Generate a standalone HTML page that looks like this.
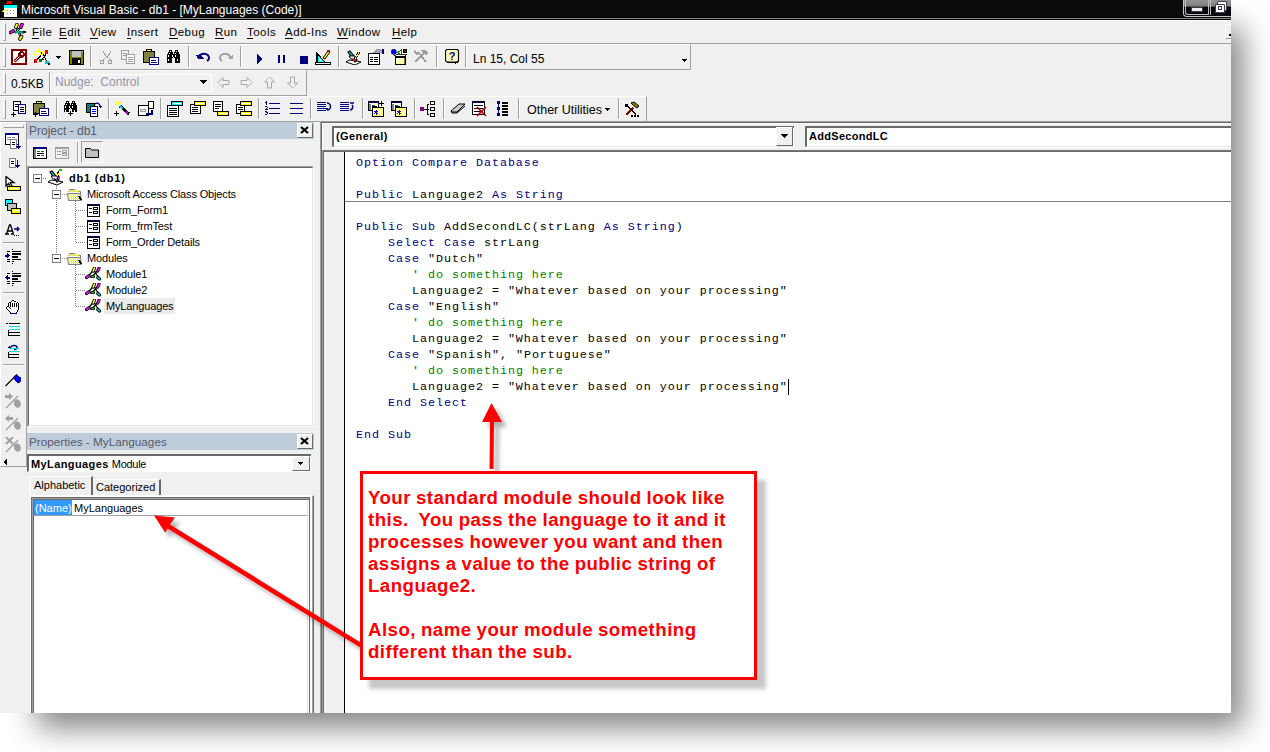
<!DOCTYPE html>
<html><head><meta charset="utf-8">
<style>
*{box-sizing:border-box;margin:0;padding:0}
html,body{width:1270px;height:752px;overflow:hidden;background:#fff;font-family:"Liberation Sans",sans-serif}
.a{position:absolute}
.t{white-space:pre;font-size:11px;color:#000;line-height:13px}
#win{position:absolute;left:0;top:0;width:1231px;height:713px;background:#f0f0f0;overflow:hidden;}
.code{position:absolute;left:356px;font-family:"Liberation Mono",monospace;font-size:11.7px;letter-spacing:0.98px;line-height:16px;white-space:pre;color:#000}
.k{color:#000080}
.c{color:#008000}
u{text-decoration:none;border-bottom:1px solid currentColor}
</style></head><body>
<div class="a" style="left:37px;top:28px;width:1206px;height:700px;background:rgba(0,0,0,0.48);filter:blur(15px)"></div>
<div id="win">
<div class="a" style="left:0px;top:0px;width:1231px;height:17px;background:#0b0b0b"></div>
<div class="a" style="left:0px;top:17px;width:1231px;height:1px;background:#000"></div>
<div class="a" style="left:0px;top:18px;width:1231px;height:1px;background:#8a8a8a"></div>
<div class="a" style="left:0px;top:19px;width:1231px;height:1px;background:#000"></div>
<div class="a" style="left:0px;top:20px;width:1231px;height:1px;background:#fff"></div>
<div class="a t" style="left:21px;top:3px;font-size:12px;color:#fff;line-height:14px">Microsoft Visual Basic - db1 - [MyLanguages (Code)]</div>
<svg class="a" style="left:1px;top:1px" width="16" height="16" viewBox="0 0 16 16" shape-rendering="crispEdges"><rect x="3" y="4" width="13" height="12" fill="#fff"/><rect x="3" y="4" width="13" height="3" fill="#0ff"/><rect x="2" y="3" width="14" height="1" fill="#000"/><rect x="6" y="0" width="4" height="2" fill="#f00"/><rect x="5" y="2" width="6" height="1" fill="#f00"/><rect x="6" y="9" width="1" height="1" fill="#aaa"/><rect x="9" y="9" width="1" height="1" fill="#aaa"/><rect x="12" y="9" width="1" height="1" fill="#aaa"/><rect x="6" y="12" width="1" height="1" fill="#aaa"/><rect x="9" y="12" width="1" height="1" fill="#aaa"/><rect x="12" y="12" width="1" height="1" fill="#aaa"/><path d="M0 11l5-3 1 1-5 3z" fill="#ff0" stroke="none" stroke-width="1" /><rect x="0" y="11" width="2" height="1" fill="#000"/></svg>
<div class="a" style="left:1183px;top:0px;width:48px;height:17px;background:linear-gradient(#939393,#7d7d7d 40%,#000 42%,#0a0a14 100%);border-left:1px solid #c8c8c8;border-bottom:1px solid #c8c8c8;border-bottom-left-radius:4px"></div>
<div class="a" style="left:1185px;top:0px;width:24px;height:15px;border-left:1px solid #bdbdbd;border-bottom:1px solid #bdbdbd;border-right:1px solid #bdbdbd;border-bottom-left-radius:3px"></div>
<div class="a" style="left:1210px;top:0px;width:1px;height:15px;background:#bdbdbd"></div>
<div class="a" style="left:1191px;top:7px;width:12px;height:5px;background:#eee;border:1px solid #3a3a50"></div>
<div class="a" style="left:1217px;top:1px;width:10px;height:10px;background:#f4f4f4;border:1px solid #3a3a50;border-radius:1px"></div>
<div class="a" style="left:1215px;top:4px;width:10px;height:9px;background:#fff;border:1px solid #3a3a50;border-radius:1px"></div>
<div class="a" style="left:1218px;top:6px;width:4px;height:4px;background:#fff;border:1px solid #3a3a50"></div>
<div class="a" style="left:3px;top:23px;width:3px;height:18px;border-left:1px solid #fff;border-top:1px solid #fff;border-right:1px solid #a0a0a0;border-bottom:1px solid #a0a0a0"></div>
<svg class="a" style="left:9px;top:23px" width="18" height="18" viewBox="0 0 18 18" shape-rendering="crispEdges"><path d="M4 8.5L15 9.5M7 4l5 10M12 4L6 10" fill="none" stroke="#000" stroke-width="2.2" shape-rendering="geometricPrecision"/><path d="M4 8.5L15 9.5M7 4l5 10M12 4L6 10" fill="none" stroke="#0cc" stroke-width="1" shape-rendering="geometricPrecision"/><path d="M8 1.5L6.8 4.2" fill="none" stroke="#000" stroke-width="3.6" stroke-linecap="round" shape-rendering="geometricPrecision"/><path d="M8 1.5L6.8 4.2" fill="none" stroke="#ff0" stroke-width="2" stroke-linecap="round" shape-rendering="geometricPrecision"/><path d="M13 1.5L11.8 4.2" fill="none" stroke="#000" stroke-width="3.6" stroke-linecap="round" shape-rendering="geometricPrecision"/><path d="M13 1.5L11.8 4.2" fill="none" stroke="#f0f" stroke-width="2" stroke-linecap="round" shape-rendering="geometricPrecision"/><path d="M1.5 9.5L4 8" fill="none" stroke="#000" stroke-width="3.6" stroke-linecap="round" shape-rendering="geometricPrecision"/><path d="M1.5 9.5L4 8" fill="none" stroke="#f0f" stroke-width="2" stroke-linecap="round" shape-rendering="geometricPrecision"/><path d="M12.5 13.5L11 16" fill="none" stroke="#000" stroke-width="3.6" stroke-linecap="round" shape-rendering="geometricPrecision"/><path d="M12.5 13.5L11 16" fill="none" stroke="#ff0" stroke-width="2" stroke-linecap="round" shape-rendering="geometricPrecision"/><rect x="6" y="8" width="3" height="2" fill="#0c0"/><rect x="14" y="8" width="3" height="2" fill="#000"/></svg>
<div class="a t" style="left:32px;top:26px;font-size:11.5px;letter-spacing:0.45px"><u>F</u>ile</div>
<div class="a t" style="left:59px;top:26px;font-size:11.5px;letter-spacing:0.45px"><u>E</u>dit</div>
<div class="a t" style="left:90px;top:26px;font-size:11.5px;letter-spacing:0.45px"><u>V</u>iew</div>
<div class="a t" style="left:127px;top:26px;font-size:11.5px;letter-spacing:0.45px"><u>I</u>nsert</div>
<div class="a t" style="left:169px;top:26px;font-size:11.5px;letter-spacing:0.45px"><u>D</u>ebug</div>
<div class="a t" style="left:215px;top:26px;font-size:11.5px;letter-spacing:0.45px"><u>R</u>un</div>
<div class="a t" style="left:247px;top:26px;font-size:11.5px;letter-spacing:0.45px"><u>T</u>ools</div>
<div class="a t" style="left:285px;top:26px;font-size:11.5px;letter-spacing:0.45px"><u>A</u>dd-Ins</div>
<div class="a t" style="left:337px;top:26px;font-size:11.5px;letter-spacing:0.45px"><u>W</u>indow</div>
<div class="a t" style="left:392px;top:26px;font-size:11.5px;letter-spacing:0.45px"><u>H</u>elp</div>
<div class="a" style="left:1225px;top:24px;width:8px;height:15px;border-left:1px solid #fff;border-top:1px solid #fff;border-bottom:1px solid #a0a0a0"></div>
<div class="a" style="left:1229px;top:34px;width:2px;height:2px;background:#000"></div>
<div class="a" style="left:0px;top:43px;width:1231px;height:1px;background:#a0a0a0"></div>
<div class="a" style="left:0px;top:44px;width:691px;height:26px;border-top:1px solid #fff;border-right:1px solid #a0a0a0;border-bottom:1px solid #a0a0a0"></div>
<div class="a" style="left:3px;top:47px;width:3px;height:20px;border-left:1px solid #fff;border-top:1px solid #fff;border-right:1px solid #a0a0a0;border-bottom:1px solid #a0a0a0"></div>
<svg class="a" style="left:11px;top:49px" width="16" height="16" viewBox="0 0 16 16" shape-rendering="crispEdges"><rect x="0" y="0" width="16" height="16" fill="#800000"/><rect x="2" y="2" width="12" height="12" fill="#fff"/><circle cx="10.5" cy="5.5" r="3.2" fill="#800000"/><circle cx="11" cy="5" r="1" fill="#fff"/><path d="M7.5 6.5L9.5 8.5L4.5 13.5L2.5 11.5Z" fill="#800000" stroke="none" stroke-width="1" shape-rendering="geometricPrecision"/><path d="M8.5 7.5L3.8 12.2" fill="none" stroke="#fff" stroke-width="0.8" shape-rendering="geometricPrecision"/></svg>
<svg class="a" style="left:34px;top:49px" width="16" height="16" viewBox="0 0 16 16" shape-rendering="crispEdges"><path d="M1 1l3 3M5 0v3M0 5h3M7 2L5 4" fill="none" stroke="#ff0" stroke-width="1.2" /><rect x="2" y="3" width="3" height="2" fill="#fff"/><path d="M2 12L9 4M5 12l5-2M8 3l5 10M13 4l-7 9" fill="none" stroke="#000" stroke-width="1" /><rect x="6" y="2" width="3" height="4" fill="#ff0"/><rect x="7" y="3" width="1" height="2" fill="#000"/><rect x="11" y="1" width="3" height="4" fill="#f00"/><rect x="13" y="3" width="1" height="1" fill="#000"/><rect x="0" y="10" width="3" height="4" fill="#f00"/><rect x="0" y="12" width="1" height="1" fill="#000"/><rect x="5" y="10" width="3" height="3" fill="#008000"/><rect x="11" y="12" width="4" height="3" fill="#0cc"/><rect x="14" y="14" width="2" height="2" fill="#000"/></svg>
<svg class="a" style="left:56px;top:56px" width="6" height="4" viewBox="0 0 6 4" shape-rendering="crispEdges"><path d="M0 0h5l-2.5 3z" fill="#000" stroke="none" stroke-width="1" /></svg>
<svg class="a" style="left:69px;top:50px" width="16" height="16" viewBox="0 0 16 16" shape-rendering="crispEdges"><rect x="0" y="0" width="15" height="15" fill="#000"/><rect x="1" y="1" width="13" height="13" fill="#808000"/><rect x="3" y="1" width="9" height="6" fill="#c0c0c0"/><rect x="3" y="8" width="9" height="6" fill="#000"/><rect x="9" y="10" width="2" height="3" fill="#fff"/><rect x="13" y="1" width="1" height="1" fill="#fff"/></svg>
<div class="a" style="left:90px;top:46px;width:1px;height:21px;background:#a0a0a0"></div>
<div class="a" style="left:91px;top:46px;width:1px;height:21px;background:#fff"></div>
<svg class="a" style="left:99px;top:50px" width="15" height="15" viewBox="0 0 15 15" shape-rendering="crispEdges"><path d="M4 1l4 7 4-7M6 8l-2 2m6-2 2 2" fill="none" stroke="#a0a0a0" stroke-width="1" /><circle cx="3" cy="12" r="2" fill="none" stroke="#a0a0a0"/><circle cx="11" cy="12" r="2" fill="none" stroke="#a0a0a0"/></svg>
<svg class="a" style="left:120px;top:49px" width="16" height="16" viewBox="0 0 16 16" shape-rendering="crispEdges"><rect x="1" y="1" width="8" height="10" fill="#a0a0a0"/><rect x="2" y="2" width="6" height="8" fill="#f0f0f0"/><rect x="3" y="4" width="4" height="1" fill="#a0a0a0"/><rect x="3" y="6" width="4" height="1" fill="#a0a0a0"/><rect x="6" y="5" width="9" height="10" fill="#a0a0a0"/><rect x="7" y="6" width="7" height="8" fill="#fff"/><rect x="8" y="8" width="5" height="1" fill="#a0a0a0"/><rect x="8" y="10" width="5" height="1" fill="#a0a0a0"/><rect x="8" y="12" width="5" height="1" fill="#a0a0a0"/></svg>
<svg class="a" style="left:143px;top:49px" width="16" height="16" viewBox="0 0 16 16" shape-rendering="crispEdges"><rect x="0" y="2" width="12" height="12" fill="#000"/><rect x="1" y="3" width="10" height="10" fill="#808040"/><rect x="3" y="0" width="6" height="3" fill="#000"/><rect x="4" y="1" width="4" height="1" fill="#ff0"/><rect x="6" y="8" width="10" height="8" fill="#000080"/><rect x="7" y="9" width="8" height="6" fill="#fff"/><rect x="8" y="11" width="5" height="1" fill="#000080"/><rect x="8" y="13" width="6" height="1" fill="#000080"/></svg>
<svg class="a" style="left:166px;top:50px" width="15" height="13" viewBox="0 0 15 13" shape-rendering="crispEdges"><rect x="3" y="0" width="3" height="1" fill="#000"/><rect x="9" y="0" width="3" height="1" fill="#000"/><rect x="3" y="1" width="1" height="1" fill="#000"/><rect x="4" y="1" width="1" height="1" fill="#fff"/><rect x="5" y="1" width="1" height="1" fill="#000"/><rect x="9" y="1" width="1" height="1" fill="#000"/><rect x="10" y="1" width="1" height="1" fill="#fff"/><rect x="11" y="1" width="1" height="1" fill="#000"/><rect x="2" y="2" width="5" height="1" fill="#000"/><rect x="8" y="2" width="5" height="1" fill="#000"/><rect x="2" y="3" width="1" height="1" fill="#000"/><rect x="3" y="3" width="1" height="1" fill="#fff"/><rect x="4" y="3" width="3" height="1" fill="#000"/><rect x="8" y="3" width="1" height="1" fill="#000"/><rect x="9" y="3" width="1" height="1" fill="#fff"/><rect x="10" y="3" width="3" height="1" fill="#000"/><rect x="1" y="4" width="13" height="1" fill="#000"/><rect x="1" y="5" width="1" height="1" fill="#000"/><rect x="2" y="5" width="1" height="1" fill="#fff"/><rect x="3" y="5" width="3" height="1" fill="#000"/><rect x="6" y="5" width="1" height="1" fill="#fff"/><rect x="7" y="5" width="2" height="1" fill="#000"/><rect x="9" y="5" width="1" height="1" fill="#fff"/><rect x="10" y="5" width="4" height="1" fill="#000"/><rect x="1" y="6" width="1" height="1" fill="#000"/><rect x="2" y="6" width="1" height="1" fill="#fff"/><rect x="3" y="6" width="3" height="1" fill="#000"/><rect x="6" y="6" width="1" height="1" fill="#fff"/><rect x="7" y="6" width="2" height="1" fill="#000"/><rect x="9" y="6" width="1" height="1" fill="#fff"/><rect x="10" y="6" width="4" height="1" fill="#000"/><rect x="1" y="7" width="6" height="1" fill="#000"/><rect x="8" y="7" width="6" height="1" fill="#000"/><rect x="1" y="8" width="5" height="1" fill="#000"/><rect x="9" y="8" width="5" height="1" fill="#000"/><rect x="1" y="9" width="1" height="1" fill="#000"/><rect x="2" y="9" width="1" height="1" fill="#fff"/><rect x="3" y="9" width="3" height="1" fill="#000"/><rect x="9" y="9" width="2" height="1" fill="#000"/><rect x="11" y="9" width="1" height="1" fill="#fff"/><rect x="12" y="9" width="2" height="1" fill="#000"/><rect x="1" y="10" width="1" height="1" fill="#000"/><rect x="2" y="10" width="1" height="1" fill="#fff"/><rect x="3" y="10" width="3" height="1" fill="#000"/><rect x="9" y="10" width="2" height="1" fill="#000"/><rect x="11" y="10" width="1" height="1" fill="#fff"/><rect x="12" y="10" width="2" height="1" fill="#000"/><rect x="1" y="11" width="5" height="1" fill="#000"/><rect x="9" y="11" width="5" height="1" fill="#000"/><rect x="1" y="12" width="5" height="1" fill="#000"/><rect x="9" y="12" width="5" height="1" fill="#000"/></svg>
<div class="a" style="left:188px;top:46px;width:1px;height:21px;background:#a0a0a0"></div>
<div class="a" style="left:189px;top:46px;width:1px;height:21px;background:#fff"></div>
<svg class="a" style="left:196px;top:51px" width="15" height="12" viewBox="0 0 15 12" shape-rendering="crispEdges"><path d="M3 3v5h5" fill="#000080" stroke="none" stroke-width="1" /><path d="M2.5 8L0 4.5 5 3z" fill="#000080" stroke="none" stroke-width="1" /><path d="M3 7a5 4 0 1 1 8 3" fill="none" stroke="#000080" stroke-width="2" shape-rendering="geometricPrecision"/></svg>
<svg class="a" style="left:218px;top:51px" width="16" height="12" viewBox="0 0 16 12" shape-rendering="crispEdges"><path d="M12 7a5 4 0 1 0-8 3" fill="none" stroke="#a0a0a0" stroke-width="2" shape-rendering="geometricPrecision"/><path d="M10 8h5V3z" fill="#a0a0a0" stroke="none" stroke-width="1" /></svg>
<div class="a" style="left:240px;top:46px;width:1px;height:21px;background:#a0a0a0"></div>
<div class="a" style="left:241px;top:46px;width:1px;height:21px;background:#fff"></div>
<svg class="a" style="left:257px;top:54px" width="7" height="10" viewBox="0 0 7 10" shape-rendering="crispEdges"><path d="M0 0v10l6-5z" fill="#000080" stroke="none" stroke-width="1" /></svg>
<svg class="a" style="left:278px;top:55px" width="8" height="9" viewBox="0 0 8 9" shape-rendering="crispEdges"><rect x="0" y="0" width="2" height="8" fill="#000080"/><rect x="5" y="0" width="2" height="8" fill="#000080"/></svg>
<svg class="a" style="left:300px;top:56px" width="9" height="9" viewBox="0 0 9 9" shape-rendering="crispEdges"><rect x="0" y="0" width="8" height="8" fill="#000080"/></svg>
<svg class="a" style="left:315px;top:49px" width="16" height="16" viewBox="0 0 16 16" shape-rendering="crispEdges"><path d="M1 15V2l11 13z" fill="#000" stroke="none" stroke-width="1" /><path d="M2.5 12.8V5.5L9 13z" fill="#0ff" stroke="none" stroke-width="1" /><path d="M4 12V9l3 3z" fill="#fff" stroke="none" stroke-width="1" /><rect x="0" y="13" width="16" height="3" fill="#000"/><rect x="1" y="14" width="14" height="1" fill="#fff"/><path d="M8 9l5-7 2 1-5 7z" fill="#ff0" stroke="#000" stroke-width="1" shape-rendering="geometricPrecision"/><rect x="12" y="1" width="3" height="2" fill="#c00000"/></svg>
<div class="a" style="left:338px;top:46px;width:1px;height:21px;background:#a0a0a0"></div>
<div class="a" style="left:339px;top:46px;width:1px;height:21px;background:#fff"></div>
<svg class="a" style="left:345px;top:49px" width="16" height="16" viewBox="0 0 16 16" shape-rendering="crispEdges"><path d="M1 13l3-2 8 1 4 1-6 3z" fill="#fff" stroke="#000" stroke-width="1" shape-rendering="geometricPrecision"/><path d="M3 3l2-1 7 9-2 2z" fill="#0cc" stroke="#000" stroke-width="1.2" shape-rendering="geometricPrecision"/><path d="M4 7h6l1 3H6z" fill="#fff" stroke="#000" stroke-width="1" shape-rendering="geometricPrecision"/><path d="M10 10l4-7" fill="none" stroke="#000" stroke-width="2.4" /><path d="M10 10l4-7" fill="none" stroke="#ff0" stroke-width="1" /><rect x="8" y="10" width="2" height="2" fill="#f00"/></svg>
<svg class="a" style="left:368px;top:49px" width="16" height="16" viewBox="0 0 16 16" shape-rendering="crispEdges"><rect x="0" y="4" width="12" height="12" fill="#000"/><rect x="1" y="5" width="10" height="10" fill="#fff"/><rect x="2" y="8" width="3" height="1" fill="#000"/><rect x="6" y="8" width="4" height="1" fill="#000"/><rect x="2" y="10" width="3" height="1" fill="#000"/><rect x="6" y="10" width="4" height="1" fill="#000"/><rect x="2" y="12" width="3" height="1" fill="#000"/><rect x="6" y="12" width="4" height="1" fill="#000"/><path d="M4 4l5-4h4l2 4z" fill="#a0a0a0" stroke="none" stroke-width="1" /><rect x="14" y="0" width="2" height="5" fill="#000080"/></svg>
<svg class="a" style="left:391px;top:49px" width="16" height="16" viewBox="0 0 16 16" shape-rendering="crispEdges"><circle cx="2.8" cy="2.8" r="2.6" fill="#0000ff" stroke="#000" stroke-width="0.6" shape-rendering="geometricPrecision"/><rect x="12" y="0" width="4" height="4" fill="#000"/><rect x="13" y="1" width="2" height="2" fill="#800000"/><path d="M7 3.5l3-2.5v5z" fill="#fff" stroke="#008000" stroke-width="1" /><path d="M3 6l3 3" fill="none" stroke="#000" stroke-width="1" /><rect x="4" y="7" width="11" height="9" fill="#000"/><rect x="5" y="9" width="8" height="6" fill="#ffff80"/><rect x="5" y="9" width="8" height="6" fill="url(#chk)"/><rect x="13" y="9" width="1" height="6" fill="#808000"/><path d="M4 7l2-2h10l-2 2z" fill="#fff" stroke="#000" stroke-width="0.8" /></svg>
<svg class="a" style="left:413px;top:49px" width="16" height="16" viewBox="0 0 16 16" shape-rendering="crispEdges"><path d="M2 13L11 4M5 3l8 10" fill="none" stroke="#a0a0a0" stroke-width="2" /><path d="M8 1h4l3 3-2 2-3-2z" fill="#a0a0a0" stroke="none" stroke-width="1" /><path d="M1 1l4 4-1 2-3-3z" fill="#a0a0a0" stroke="none" stroke-width="1" /></svg>
<div class="a" style="left:436px;top:46px;width:1px;height:21px;background:#a0a0a0"></div>
<div class="a" style="left:437px;top:46px;width:1px;height:21px;background:#fff"></div>
<svg class="a" style="left:445px;top:49px" width="16" height="16" viewBox="0 0 16 16" shape-rendering="crispEdges"><rect x="0.5" y="0.5" width="13" height="12.5" rx="2" fill="#ffffc0" stroke="#000" stroke-width="1.2" shape-rendering="geometricPrecision"/><path d="M9 13l2 3v-3z" fill="#000" stroke="none" stroke-width="1" /><rect x="13" y="3" width="1" height="10" fill="#000"/><rect x="2" y="13" width="11" height="1" fill="#000"/><text x="7" y="11" font-size="11" font-weight="bold" text-anchor="middle" fill="#000080" font-family="Liberation Sans">?</text></svg>
<div class="a" style="left:465px;top:46px;width:1px;height:21px;background:#a0a0a0"></div>
<div class="a" style="left:466px;top:46px;width:1px;height:21px;background:#fff"></div>
<div class="a t" style="left:473px;top:52px;font-size:12px;line-height:14px">Ln 15, Col 55</div>
<svg class="a" style="left:682px;top:59px" width="6" height="4" viewBox="0 0 6 4" shape-rendering="crispEdges"><path d="M0 0h5l-2.5 3z" fill="#000" stroke="none" stroke-width="1" /></svg>
<div class="a" style="left:0px;top:70px;width:307px;height:26px;border-top:1px solid #fff;border-right:1px solid #a0a0a0;border-bottom:1px solid #a0a0a0"></div>
<div class="a" style="left:3px;top:73px;width:3px;height:20px;border-left:1px solid #fff;border-top:1px solid #fff;border-right:1px solid #a0a0a0;border-bottom:1px solid #a0a0a0"></div>
<div class="a t" style="left:11px;top:77px;font-size:12px;line-height:14px">0.5KB</div>
<div class="a" style="left:49px;top:72px;width:1px;height:21px;background:#a0a0a0"></div>
<div class="a" style="left:50px;top:72px;width:1px;height:21px;background:#fff"></div>
<div class="a" style="left:54px;top:74px;width:158px;height:18px;border:1px solid #fff"></div>
<div class="a t" style="left:55px;top:75px;font-size:12px;line-height:14px;color:#9595a8">Nudge:  Control</div>
<svg class="a" style="left:200px;top:80px" width="8" height="5" viewBox="0 0 8 5" shape-rendering="crispEdges"><path d="M0 0h7l-3.5 4z" fill="#000" stroke="none" stroke-width="1" /></svg>
<svg class="a" style="left:217px;top:76px" width="13" height="13" viewBox="0 0 13 13" shape-rendering="crispEdges"><g transform="rotate(0 6.5 6.5)"><path d="M1 6.5L6 1.5V4.5H12V8.5H6V11.5Z" fill="none" stroke="#a8a8a8" stroke-width="1" shape-rendering="geometricPrecision"/><rect x="2" y="7" width="1" height="1" fill="#fff"/></g></svg>
<svg class="a" style="left:240px;top:76px" width="13" height="13" viewBox="0 0 13 13" shape-rendering="crispEdges"><g transform="rotate(180 6.5 6.5)"><path d="M1 6.5L6 1.5V4.5H12V8.5H6V11.5Z" fill="none" stroke="#a8a8a8" stroke-width="1" shape-rendering="geometricPrecision"/><rect x="2" y="7" width="1" height="1" fill="#fff"/></g></svg>
<svg class="a" style="left:263px;top:76px" width="13" height="13" viewBox="0 0 13 13" shape-rendering="crispEdges"><g transform="rotate(90 6.5 6.5)"><path d="M1 6.5L6 1.5V4.5H12V8.5H6V11.5Z" fill="none" stroke="#a8a8a8" stroke-width="1" shape-rendering="geometricPrecision"/><rect x="2" y="7" width="1" height="1" fill="#fff"/></g></svg>
<svg class="a" style="left:286px;top:76px" width="13" height="13" viewBox="0 0 13 13" shape-rendering="crispEdges"><g transform="rotate(270 6.5 6.5)"><path d="M1 6.5L6 1.5V4.5H12V8.5H6V11.5Z" fill="none" stroke="#a8a8a8" stroke-width="1" shape-rendering="geometricPrecision"/><rect x="2" y="7" width="1" height="1" fill="#fff"/></g></svg>
<div class="a" style="left:0px;top:96px;width:647px;height:26px;border-top:1px solid #fff;border-right:1px solid #a0a0a0;border-bottom:1px solid #a0a0a0"></div>
<div class="a" style="left:3px;top:99px;width:3px;height:20px;border-left:1px solid #fff;border-top:1px solid #fff;border-right:1px solid #a0a0a0;border-bottom:1px solid #a0a0a0"></div>
<svg class="a" style="left:11px;top:101px" width="16" height="16" viewBox="0 0 16 16" shape-rendering="crispEdges"><rect x="2" y="0" width="8" height="10" fill="#000"/><rect x="3" y="1" width="6" height="8" fill="#fff"/><rect x="4" y="3" width="4" height="1" fill="#000"/><rect x="4" y="5" width="3" height="1" fill="#000"/><rect x="7" y="3" width="8" height="10" fill="#000080"/><rect x="8" y="4" width="6" height="8" fill="#fff"/><rect x="9" y="6" width="4" height="1" fill="#000"/><rect x="9" y="8" width="4" height="1" fill="#000"/><rect x="9" y="10" width="4" height="1" fill="#000"/><rect x="0" y="13" width="5" height="1" fill="#000"/><rect x="2" y="11" width="1" height="5" fill="#000"/></svg>
<svg class="a" style="left:33px;top:101px" width="16" height="16" viewBox="0 0 16 16" shape-rendering="crispEdges"><rect x="0" y="2" width="12" height="11" fill="#000"/><rect x="1" y="3" width="10" height="9" fill="#808040"/><rect x="3" y="0" width="6" height="3" fill="#000"/><rect x="4" y="1" width="4" height="1" fill="#ff0"/><rect x="6" y="7" width="10" height="8" fill="#000080"/><rect x="7" y="8" width="8" height="6" fill="#fff"/><rect x="8" y="10" width="5" height="1" fill="#000080"/><rect x="8" y="12" width="6" height="1" fill="#000080"/><rect x="0" y="13" width="5" height="1" fill="#000"/><rect x="2" y="11" width="1" height="5" fill="#000"/></svg>
<svg class="a" style="left:63px;top:101px" width="16" height="16" viewBox="0 0 16 16" shape-rendering="crispEdges"><rect x="3" y="0" width="3" height="1" fill="#000"/><rect x="9" y="0" width="3" height="1" fill="#000"/><rect x="3" y="1" width="1" height="1" fill="#000"/><rect x="4" y="1" width="1" height="1" fill="#fff"/><rect x="5" y="1" width="1" height="1" fill="#000"/><rect x="9" y="1" width="1" height="1" fill="#000"/><rect x="10" y="1" width="1" height="1" fill="#fff"/><rect x="11" y="1" width="1" height="1" fill="#000"/><rect x="2" y="2" width="5" height="1" fill="#000"/><rect x="8" y="2" width="5" height="1" fill="#000"/><rect x="2" y="3" width="1" height="1" fill="#000"/><rect x="3" y="3" width="1" height="1" fill="#fff"/><rect x="4" y="3" width="3" height="1" fill="#000"/><rect x="8" y="3" width="1" height="1" fill="#000"/><rect x="9" y="3" width="1" height="1" fill="#fff"/><rect x="10" y="3" width="3" height="1" fill="#000"/><rect x="1" y="4" width="13" height="1" fill="#000"/><rect x="1" y="5" width="1" height="1" fill="#000"/><rect x="2" y="5" width="1" height="1" fill="#fff"/><rect x="3" y="5" width="3" height="1" fill="#000"/><rect x="6" y="5" width="1" height="1" fill="#fff"/><rect x="7" y="5" width="2" height="1" fill="#000"/><rect x="9" y="5" width="1" height="1" fill="#fff"/><rect x="10" y="5" width="4" height="1" fill="#000"/><rect x="1" y="6" width="1" height="1" fill="#000"/><rect x="2" y="6" width="1" height="1" fill="#fff"/><rect x="3" y="6" width="3" height="1" fill="#000"/><rect x="6" y="6" width="1" height="1" fill="#fff"/><rect x="7" y="6" width="2" height="1" fill="#000"/><rect x="9" y="6" width="1" height="1" fill="#fff"/><rect x="10" y="6" width="4" height="1" fill="#000"/><rect x="1" y="7" width="6" height="1" fill="#000"/><rect x="8" y="7" width="6" height="1" fill="#000"/><rect x="1" y="8" width="5" height="1" fill="#000"/><rect x="9" y="8" width="5" height="1" fill="#000"/><rect x="1" y="9" width="1" height="1" fill="#000"/><rect x="2" y="9" width="1" height="1" fill="#fff"/><rect x="3" y="9" width="3" height="1" fill="#000"/><rect x="9" y="9" width="2" height="1" fill="#000"/><rect x="11" y="9" width="1" height="1" fill="#fff"/><rect x="12" y="9" width="2" height="1" fill="#000"/><rect x="1" y="10" width="1" height="1" fill="#000"/><rect x="2" y="10" width="1" height="1" fill="#fff"/><rect x="3" y="10" width="3" height="1" fill="#000"/><rect x="9" y="10" width="2" height="1" fill="#000"/><rect x="11" y="10" width="1" height="1" fill="#fff"/><rect x="12" y="10" width="2" height="1" fill="#000"/><rect x="5" y="12" width="5" height="1" fill="#000"/><rect x="7" y="10" width="1" height="5" fill="#000"/></svg>
<svg class="a" style="left:86px;top:101px" width="16" height="16" viewBox="0 0 16 16" shape-rendering="crispEdges"><rect x="0" y="2" width="9" height="10" fill="#000"/><rect x="1" y="3" width="7" height="8" fill="#008080"/><rect x="4" y="5" width="8" height="11" fill="#000"/><rect x="5" y="6" width="6" height="9" fill="#fff"/><rect x="6" y="8" width="4" height="1" fill="#00f"/><rect x="6" y="10" width="4" height="1" fill="#00f"/><rect x="6" y="12" width="4" height="1" fill="#00f"/><path d="M9 3a3 3 0 0 1 5 2" fill="none" stroke="#000080" stroke-width="1.3" shape-rendering="geometricPrecision"/><path d="M12 5h4l-2 2z" fill="#000080" stroke="none" stroke-width="1" /></svg>
<svg class="a" style="left:114px;top:101px" width="16" height="16" viewBox="0 0 16 16" shape-rendering="crispEdges"><rect x="4" y="0" width="1" height="3" fill="#ff0"/><rect x="1" y="3" width="3" height="1" fill="#ff0"/><rect x="2" y="1" width="1" height="1" fill="#ff0"/><rect x="6" y="2" width="1" height="1" fill="#ff0"/><rect x="5" y="4" width="2" height="2" fill="#ff0"/><path d="M6 5l9 8" fill="none" stroke="#000" stroke-width="3" /><path d="M6 5l3 3" fill="none" stroke="#0cc" stroke-width="2" /><path d="M12 11l2 2" fill="none" stroke="#c0c" stroke-width="2" /><rect x="0" y="12" width="5" height="1" fill="#000"/><rect x="2" y="10" width="1" height="5" fill="#000"/></svg>
<svg class="a" style="left:138px;top:101px" width="16" height="16" viewBox="0 0 16 16" shape-rendering="crispEdges"><rect x="0" y="4" width="11" height="11" fill="#000"/><rect x="1" y="5" width="9" height="9" fill="#fff"/><rect x="2" y="8" width="6" height="3" fill="#a0a0a0"/><rect x="3" y="9" width="4" height="1" fill="#fff"/><rect x="10" y="0" width="6" height="8" fill="#000"/><rect x="11" y="1" width="4" height="6" fill="#fff"/><path d="M14 9v4h-5" fill="none" stroke="#000080" stroke-width="1.3" /><path d="M9 11v4l-2-2z" fill="#000080" stroke="none" stroke-width="1" /></svg>
<svg class="a" style="left:167px;top:101px" width="16" height="16" viewBox="0 0 16 16" shape-rendering="crispEdges"><rect x="0" y="4" width="12" height="12" fill="#000"/><rect x="1" y="5" width="10" height="10" fill="#fff"/><rect x="2" y="7" width="8" height="1" fill="#000"/><rect x="2" y="9" width="8" height="1" fill="#000"/><rect x="2" y="11" width="8" height="1" fill="#000"/><rect x="2" y="13" width="8" height="1" fill="#000"/><rect x="4" y="0" width="12" height="5" fill="#000"/><rect x="5" y="1" width="10" height="3" fill="#0ff"/><rect x="6" y="2" width="8" height="1" fill="#fff"/></svg>
<svg class="a" style="left:190px;top:101px" width="16" height="16" viewBox="0 0 16 16" shape-rendering="crispEdges"><rect x="0" y="3" width="11" height="10" fill="#000"/><rect x="1" y="4" width="9" height="8" fill="#fff"/><rect x="2" y="6" width="6" height="1" fill="#000"/><rect x="2" y="8" width="6" height="1" fill="#000"/><rect x="2" y="10" width="6" height="1" fill="#000"/><rect x="4" y="0" width="12" height="5" fill="#000"/><rect x="5" y="1" width="10" height="3" fill="#ff0"/><rect x="6" y="2" width="8" height="1" fill="#fff"/></svg>
<svg class="a" style="left:213px;top:101px" width="16" height="16" viewBox="0 0 16 16" shape-rendering="crispEdges"><rect x="0" y="0" width="10" height="11" fill="#000"/><rect x="1" y="1" width="8" height="9" fill="#fff"/><rect x="2" y="3" width="6" height="1" fill="#000"/><rect x="2" y="5" width="6" height="1" fill="#000"/><rect x="2" y="7" width="4" height="1" fill="#000"/><rect x="4" y="10" width="12" height="5" fill="#000"/><rect x="5" y="11" width="10" height="3" fill="#ff0"/><rect x="6" y="12" width="8" height="1" fill="#fff"/></svg>
<svg class="a" style="left:236px;top:101px" width="16" height="16" viewBox="0 0 16 16" shape-rendering="crispEdges"><rect x="0" y="3" width="9" height="10" fill="#000"/><rect x="1" y="4" width="7" height="8" fill="#fff"/><rect x="2" y="6" width="5" height="1" fill="#000"/><rect x="2" y="8" width="5" height="1" fill="#000"/><rect x="4" y="0" width="12" height="5" fill="#000"/><rect x="5" y="1" width="10" height="3" fill="#ff0"/><rect x="6" y="2" width="8" height="1" fill="#fff"/><rect x="4" y="10" width="12" height="5" fill="#000"/><rect x="5" y="11" width="10" height="3" fill="#ff0"/><rect x="6" y="12" width="8" height="1" fill="#fff"/></svg>
<svg class="a" style="left:265px;top:101px" width="16" height="16" viewBox="0 0 16 16" shape-rendering="crispEdges"><rect x="1" y="0" width="1" height="1" fill="#000080"/><rect x="0" y="1" width="2" height="1" fill="#000080"/><rect x="1" y="2" width="1" height="1" fill="#000080"/><rect x="1" y="3" width="1" height="1" fill="#000080"/><rect x="0" y="5" width="2" height="1" fill="#000080"/><rect x="2" y="6" width="1" height="1" fill="#000080"/><rect x="1" y="7" width="1" height="1" fill="#000080"/><rect x="0" y="8" width="3" height="1" fill="#000080"/><rect x="0" y="10" width="2" height="1" fill="#000080"/><rect x="1" y="11" width="2" height="1" fill="#000080"/><rect x="2" y="12" width="1" height="1" fill="#000080"/><rect x="0" y="13" width="2" height="1" fill="#000080"/><rect x="4" y="2" width="11" height="1.3" fill="#000080"/><rect x="4" y="7" width="11" height="1.3" fill="#000080"/><rect x="4" y="12" width="11" height="1.3" fill="#000080"/></svg>
<svg class="a" style="left:289px;top:101px" width="16" height="16" viewBox="0 0 16 16" shape-rendering="crispEdges"><rect x="1" y="2" width="13" height="1.3" fill="#000080"/><rect x="1" y="7" width="13" height="1.3" fill="#000080"/><rect x="1" y="12" width="13" height="1.3" fill="#000080"/></svg>
<svg class="a" style="left:317px;top:101px" width="16" height="16" viewBox="0 0 16 16" shape-rendering="crispEdges"><rect x="0" y="1" width="9" height="1" fill="#000080"/><rect x="0" y="3" width="9" height="1" fill="#000080"/><rect x="0" y="5" width="9" height="1" fill="#000080"/><rect x="0" y="7" width="9" height="1" fill="#000080"/><rect x="0" y="9" width="9" height="1" fill="#000080"/><path d="M10 2a3 3 0 0 1 0 7" fill="none" stroke="#000080" stroke-width="1.5" shape-rendering="geometricPrecision"/><path d="M8 7l2 3 1-3z" fill="#000080" stroke="none" stroke-width="1" /></svg>
<svg class="a" style="left:340px;top:101px" width="16" height="16" viewBox="0 0 16 16" shape-rendering="crispEdges"><rect x="0" y="1" width="9" height="1" fill="#000080"/><rect x="0" y="3" width="9" height="1" fill="#000080"/><rect x="0" y="5" width="9" height="1" fill="#000080"/><rect x="0" y="7" width="9" height="1" fill="#000080"/><rect x="0" y="9" width="9" height="1" fill="#000080"/><path d="M10 2h4M12 4a3 3 0 0 1-2 5" fill="none" stroke="#000080" stroke-width="1.5" shape-rendering="geometricPrecision"/></svg>
<svg class="a" style="left:368px;top:101px" width="16" height="16" viewBox="0 0 16 16" shape-rendering="crispEdges"><rect x="0" y="0" width="11" height="10" fill="#000"/><rect x="1" y="2" width="9" height="7" fill="#fff"/><rect x="1" y="1" width="9" height="1" fill="#000080"/><rect x="1" y="3" width="2" height="6" fill="#808080"/><rect x="4" y="4" width="3" height="1" fill="#008000"/><rect x="4" y="6" width="12" height="10" fill="#000"/><rect x="5" y="7" width="10" height="8" fill="#ff8"/><rect x="4" y="5" width="5" height="2" fill="#000"/><path d="M8 9v5M6 10l4 3M10 10l-4 3" fill="none" stroke="#00f" stroke-width="1" /><rect x="11" y="2" width="5" height="1" fill="#000"/><rect x="13" y="0" width="1" height="5" fill="#000"/></svg>
<svg class="a" style="left:391px;top:101px" width="16" height="16" viewBox="0 0 16 16" shape-rendering="crispEdges"><rect x="0" y="0" width="11" height="10" fill="#000"/><rect x="1" y="2" width="9" height="7" fill="#fff"/><rect x="1" y="1" width="9" height="1" fill="#000080"/><rect x="1" y="3" width="2" height="6" fill="#808080"/><rect x="4" y="4" width="3" height="1" fill="#008000"/><rect x="4" y="6" width="12" height="10" fill="#000"/><rect x="5" y="7" width="10" height="8" fill="#ff8"/><rect x="4" y="5" width="5" height="2" fill="#000"/><path d="M8 9v5M6 10l4 3M10 10l-4 3" fill="none" stroke="#00f" stroke-width="1" /></svg>
<svg class="a" style="left:420px;top:101px" width="16" height="16" viewBox="0 0 16 16" shape-rendering="crispEdges"><rect x="0" y="6" width="4" height="4" fill="#800080"/><path d="M4 8h3M7 3v10M7 3h2M7 8h2M7 13h2" fill="none" stroke="#000" stroke-width="1" /><rect x="10" y="0" width="5" height="4" fill="#000"/><rect x="11" y="1" width="3" height="2" fill="#fff"/><rect x="10" y="6" width="5" height="4" fill="#000"/><rect x="11" y="7" width="3" height="2" fill="#fff"/><rect x="10" y="12" width="5" height="4" fill="#000"/><rect x="11" y="13" width="3" height="2" fill="#fff"/></svg>
<svg class="a" style="left:450px;top:101px" width="16" height="16" viewBox="0 0 16 16" shape-rendering="crispEdges"><path d="M1 10l8-7h6l-8 8H2z" fill="#c8c8c8" stroke="#000" stroke-width="1" shape-rendering="geometricPrecision"/><path d="M1 10l1 2h5l8-7" fill="none" stroke="#000" stroke-width="1" shape-rendering="geometricPrecision"/></svg>
<svg class="a" style="left:472px;top:101px" width="16" height="16" viewBox="0 0 16 16" shape-rendering="crispEdges"><rect x="0" y="0" width="13" height="14" fill="#000"/><rect x="1" y="2" width="11" height="11" fill="#fff"/><rect x="1" y="1" width="11" height="1" fill="#000080"/><rect x="2" y="4" width="9" height="1" fill="#000"/><rect x="2" y="7" width="9" height="1" fill="#000"/><rect x="2" y="10" width="9" height="1" fill="#000"/><path d="M5 6l9 9M14 6l-9 9" fill="none" stroke="#c00000" stroke-width="1.6" shape-rendering="geometricPrecision"/></svg>
<svg class="a" style="left:497px;top:101px" width="16" height="16" viewBox="0 0 16 16" shape-rendering="crispEdges"><rect x="0" y="0" width="3" height="3" fill="#000080"/><rect x="0" y="6" width="3" height="3" fill="#000080"/><rect x="0" y="12" width="3" height="3" fill="#000080"/><rect x="1" y="3" width="1" height="3" fill="#000080"/><rect x="1" y="9" width="1" height="3" fill="#000080"/><rect x="5" y="1" width="6" height="1.5" fill="#000"/><rect x="5" y="4" width="6" height="1.5" fill="#000"/><rect x="5" y="7" width="6" height="1.5" fill="#000"/><rect x="5" y="10" width="6" height="1.5" fill="#000"/><rect x="5" y="13" width="6" height="1.5" fill="#000"/></svg>
<svg class="a" style="left:624px;top:101px" width="16" height="16" viewBox="0 0 16 16" shape-rendering="crispEdges"><path d="M2 14L9 7" fill="none" stroke="#800000" stroke-width="2.5" /><path d="M1 3h3v2l8 8-1 1-8-8H1z" fill="#000" stroke="none" stroke-width="1" /><path d="M7 2l3-1 5 4-2 2-3-2z" fill="#808000" stroke="#000" stroke-width="1" shape-rendering="geometricPrecision"/><rect x="7" y="14" width="2" height="2" fill="#000"/><rect x="10" y="14" width="2" height="2" fill="#000"/><rect x="13" y="14" width="2" height="2" fill="#000"/></svg>
<div class="a" style="left:56px;top:98px;width:1px;height:21px;background:#a0a0a0"></div>
<div class="a" style="left:57px;top:98px;width:1px;height:21px;background:#fff"></div>
<div class="a" style="left:108px;top:98px;width:1px;height:21px;background:#a0a0a0"></div>
<div class="a" style="left:109px;top:98px;width:1px;height:21px;background:#fff"></div>
<div class="a" style="left:160px;top:98px;width:1px;height:21px;background:#a0a0a0"></div>
<div class="a" style="left:161px;top:98px;width:1px;height:21px;background:#fff"></div>
<div class="a" style="left:258px;top:98px;width:1px;height:21px;background:#a0a0a0"></div>
<div class="a" style="left:259px;top:98px;width:1px;height:21px;background:#fff"></div>
<div class="a" style="left:310px;top:98px;width:1px;height:21px;background:#a0a0a0"></div>
<div class="a" style="left:311px;top:98px;width:1px;height:21px;background:#fff"></div>
<div class="a" style="left:362px;top:98px;width:1px;height:21px;background:#a0a0a0"></div>
<div class="a" style="left:363px;top:98px;width:1px;height:21px;background:#fff"></div>
<div class="a" style="left:414px;top:98px;width:1px;height:21px;background:#a0a0a0"></div>
<div class="a" style="left:415px;top:98px;width:1px;height:21px;background:#fff"></div>
<div class="a" style="left:443px;top:98px;width:1px;height:21px;background:#a0a0a0"></div>
<div class="a" style="left:444px;top:98px;width:1px;height:21px;background:#fff"></div>
<div class="a" style="left:518px;top:98px;width:1px;height:21px;background:#a0a0a0"></div>
<div class="a" style="left:519px;top:98px;width:1px;height:21px;background:#fff"></div>
<div class="a" style="left:618px;top:98px;width:1px;height:21px;background:#a0a0a0"></div>
<div class="a" style="left:619px;top:98px;width:1px;height:21px;background:#fff"></div>
<div class="a t" style="left:527px;top:103px;font-size:12.5px;line-height:14px">Other Utilities</div>
<svg class="a" style="left:605px;top:108px" width="6" height="4" viewBox="0 0 6 4" shape-rendering="crispEdges"><path d="M0 0h5l-2.5 3z" fill="#000" stroke="none" stroke-width="1" /></svg>
<div class="a" style="left:0px;top:122px;width:27px;height:345px;border-top:1px solid #fff;border-left:1px solid #fff;border-right:1px solid #a0a0a0;border-bottom:1px solid #a0a0a0"></div>
<div class="a" style="left:3px;top:125px;width:21px;height:3px;border-left:1px solid #fff;border-top:1px solid #fff;border-right:1px solid #a0a0a0;border-bottom:1px solid #a0a0a0"></div>
<svg class="a" style="left:5px;top:133px" width="16" height="16" viewBox="0 0 16 16" shape-rendering="crispEdges"><rect x="0" y="0" width="14" height="12" fill="#000"/><rect x="1" y="1" width="12" height="10" fill="#fff"/><rect x="1" y="0" width="13" height="2" fill="#000080"/><rect x="2" y="4" width="4" height="1" fill="#888"/><rect x="7" y="4" width="3" height="1" fill="#888"/><rect x="2" y="6" width="3" height="1" fill="#888"/><rect x="5" y="6" width="7" height="10" fill="#808080"/><rect x="6" y="7" width="5" height="8" fill="#fff"/><rect x="7" y="9" width="3" height="1" fill="#000"/><rect x="7" y="11" width="3" height="1" fill="#000"/><rect x="13" y="9" width="1" height="5" fill="#000080"/><path d="M11 13h5l-2.5 3z" fill="#000080" stroke="none" stroke-width="1" /></svg>
<svg class="a" style="left:9px;top:158px" width="16" height="16" viewBox="0 0 16 16" shape-rendering="crispEdges"><rect x="0" y="0" width="7" height="10" fill="#808080"/><rect x="1" y="1" width="5" height="8" fill="#fff"/><rect x="2" y="3" width="3" height="1" fill="#000"/><rect x="2" y="5" width="3" height="1" fill="#000"/><rect x="8" y="2" width="1" height="6" fill="#000080"/><path d="M6 7h5l-2.5 3z" fill="#000080" stroke="none" stroke-width="1" /></svg>
<svg class="a" style="left:5px;top:176px" width="16" height="16" viewBox="0 0 16 16" shape-rendering="crispEdges"><path d="M1 0.5v9.5l2.5-2.5 2.5 4.5 1.5-1-2.2-4.3H9z" fill="#fff" stroke="#000" stroke-width="1.3" shape-rendering="geometricPrecision"/><rect x="2" y="10" width="14" height="5" fill="#000"/><rect x="3" y="11" width="12" height="3" fill="#ff0"/><rect x="4" y="12" width="10" height="1" fill="#fff"/></svg>
<svg class="a" style="left:5px;top:199px" width="16" height="16" viewBox="0 0 16 16" shape-rendering="crispEdges"><rect x="0" y="0" width="8" height="7" fill="#000"/><rect x="1" y="1" width="6" height="5" fill="#0ff"/><rect x="2" y="4" width="10" height="8" fill="#000"/><rect x="3" y="5" width="8" height="6" fill="#c0c0c0"/><rect x="6" y="9" width="10" height="6" fill="#000"/><rect x="7" y="10" width="8" height="4" fill="#ff0"/><rect x="8" y="11" width="6" height="1" fill="#fff"/></svg>
<svg class="a" style="left:5px;top:224px" width="16" height="16" viewBox="0 0 16 16" shape-rendering="crispEdges"><path d="M0 10h4M6 10h3M1.5 10L4.5 1h1l3 9M3 7h4" fill="none" stroke="#000" stroke-width="1.3" shape-rendering="geometricPrecision"/><path d="M9 5h5M12 3l2 2-2 2" fill="none" stroke="#000080" stroke-width="1.3" shape-rendering="geometricPrecision"/><rect x="9" y="11" width="1" height="1" fill="#000"/><rect x="11" y="11" width="1" height="1" fill="#000"/><rect x="13" y="11" width="1" height="1" fill="#000"/></svg>
<svg class="a" style="left:5px;top:249px" width="16" height="16" viewBox="0 0 16 16" shape-rendering="crispEdges"><rect x="7" y="0" width="1" height="1" fill="#000"/><rect x="7" y="14" width="1" height="1" fill="#000"/><rect x="2" y="2" width="3" height="1" fill="#000"/><rect x="7" y="2" width="9" height="1" fill="#000"/><rect x="7" y="4" width="9" height="2" fill="#000"/><rect x="7" y="7" width="6" height="2" fill="#000"/><rect x="2" y="10" width="3" height="1" fill="#000"/><rect x="7" y="10" width="9" height="1" fill="#000"/><rect x="2" y="12" width="3" height="1" fill="#000"/><rect x="7" y="12" width="2" height="1" fill="#000"/><path d="M5 6.5L2 3.5V5.5H0V7.5H2V9.5Z" fill="#000080" stroke="none" stroke-width="1" /></svg>
<svg class="a" style="left:5px;top:271px" width="16" height="16" viewBox="0 0 16 16" shape-rendering="crispEdges"><rect x="7" y="0" width="1" height="1" fill="#000"/><rect x="7" y="14" width="1" height="1" fill="#000"/><rect x="2" y="2" width="3" height="1" fill="#000"/><rect x="7" y="2" width="9" height="1" fill="#000"/><rect x="7" y="4" width="9" height="2" fill="#000"/><rect x="7" y="7" width="6" height="2" fill="#000"/><rect x="2" y="10" width="3" height="1" fill="#000"/><rect x="7" y="10" width="9" height="1" fill="#000"/><rect x="2" y="12" width="3" height="1" fill="#000"/><rect x="7" y="12" width="2" height="1" fill="#000"/><path d="M0 6.5L3 3.5V5.5H5V7.5H3V9.5Z" fill="#000080" stroke="none" stroke-width="1" /></svg>
<svg class="a" style="left:6px;top:300px" width="16" height="16" viewBox="0 0 16 16" shape-rendering="crispEdges"><rect x="6" y="0" width="2" height="1" fill="#000"/><rect x="5" y="1" width="1" height="1" fill="#000"/><rect x="6" y="1" width="2" height="1" fill="#fff"/><rect x="8" y="1" width="2" height="1" fill="#000"/><rect x="3" y="2" width="2" height="1" fill="#000"/><rect x="5" y="2" width="6" height="1" fill="#fff"/><rect x="11" y="2" width="1" height="1" fill="#000"/><rect x="2" y="3" width="1" height="1" fill="#000"/><rect x="3" y="3" width="1" height="1" fill="#fff"/><rect x="4" y="3" width="1" height="1" fill="#000"/><rect x="5" y="3" width="1" height="1" fill="#fff"/><rect x="6" y="3" width="1" height="1" fill="#000"/><rect x="7" y="3" width="1" height="1" fill="#fff"/><rect x="8" y="3" width="1" height="1" fill="#000"/><rect x="9" y="3" width="1" height="1" fill="#fff"/><rect x="10" y="3" width="1" height="1" fill="#000"/><rect x="11" y="3" width="1" height="1" fill="#fff"/><rect x="12" y="3" width="1" height="1" fill="#000"/><rect x="2" y="4" width="1" height="1" fill="#000"/><rect x="3" y="4" width="1" height="1" fill="#fff"/><rect x="4" y="4" width="1" height="1" fill="#000"/><rect x="5" y="4" width="1" height="1" fill="#fff"/><rect x="6" y="4" width="1" height="1" fill="#000"/><rect x="7" y="4" width="1" height="1" fill="#fff"/><rect x="8" y="4" width="1" height="1" fill="#000"/><rect x="9" y="4" width="1" height="1" fill="#fff"/><rect x="10" y="4" width="1" height="1" fill="#000"/><rect x="11" y="4" width="1" height="1" fill="#fff"/><rect x="12" y="4" width="1" height="1" fill="#000"/><rect x="2" y="5" width="1" height="1" fill="#000"/><rect x="3" y="5" width="1" height="1" fill="#fff"/><rect x="4" y="5" width="1" height="1" fill="#000"/><rect x="5" y="5" width="1" height="1" fill="#fff"/><rect x="6" y="5" width="1" height="1" fill="#000"/><rect x="7" y="5" width="1" height="1" fill="#fff"/><rect x="8" y="5" width="1" height="1" fill="#000"/><rect x="9" y="5" width="1" height="1" fill="#fff"/><rect x="10" y="5" width="1" height="1" fill="#000"/><rect x="11" y="5" width="1" height="1" fill="#fff"/><rect x="12" y="5" width="1" height="1" fill="#000"/><rect x="1" y="6" width="2" height="1" fill="#000"/><rect x="3" y="6" width="1" height="1" fill="#fff"/><rect x="4" y="6" width="1" height="1" fill="#000"/><rect x="5" y="6" width="1" height="1" fill="#fff"/><rect x="6" y="6" width="1" height="1" fill="#000"/><rect x="7" y="6" width="1" height="1" fill="#fff"/><rect x="8" y="6" width="1" height="1" fill="#000"/><rect x="9" y="6" width="1" height="1" fill="#fff"/><rect x="10" y="6" width="1" height="1" fill="#000"/><rect x="11" y="6" width="1" height="1" fill="#fff"/><rect x="12" y="6" width="1" height="1" fill="#000"/><rect x="0" y="7" width="1" height="1" fill="#000"/><rect x="1" y="7" width="2" height="1" fill="#fff"/><rect x="3" y="7" width="1" height="1" fill="#000"/><rect x="4" y="7" width="8" height="1" fill="#fff"/><rect x="12" y="7" width="1" height="1" fill="#000"/><rect x="0" y="8" width="1" height="1" fill="#000"/><rect x="1" y="8" width="3" height="1" fill="#fff"/><rect x="4" y="8" width="1" height="1" fill="#000"/><rect x="5" y="8" width="7" height="1" fill="#fff"/><rect x="12" y="8" width="1" height="1" fill="#000"/><rect x="1" y="9" width="1" height="1" fill="#000"/><rect x="2" y="9" width="10" height="1" fill="#fff"/><rect x="12" y="9" width="1" height="1" fill="#000"/><rect x="2" y="10" width="1" height="1" fill="#000"/><rect x="3" y="10" width="8" height="1" fill="#fff"/><rect x="11" y="10" width="1" height="1" fill="#000"/><rect x="3" y="11" width="1" height="1" fill="#000"/><rect x="4" y="11" width="7" height="1" fill="#fff"/><rect x="11" y="11" width="1" height="1" fill="#000"/><rect x="4" y="12" width="1" height="1" fill="#000"/><rect x="5" y="12" width="5" height="1" fill="#fff"/><rect x="10" y="12" width="1" height="1" fill="#000"/><rect x="4" y="13" width="7" height="1" fill="#000080"/></svg>
<svg class="a" style="left:6px;top:323px" width="16" height="16" viewBox="0 0 16 16" shape-rendering="crispEdges"><rect x="0" y="0" width="2" height="1" fill="#000"/><rect x="3" y="0" width="11" height="1" fill="#000"/><rect x="3" y="3" width="11" height="1" fill="#0dd"/><rect x="3" y="6" width="11" height="1" fill="#0dd"/><rect x="3" y="9" width="11" height="1" fill="#000"/><rect x="2" y="12" width="12" height="1" fill="#000"/><rect x="2" y="7" width="1" height="6" fill="#000"/></svg>
<svg class="a" style="left:7px;top:343px" width="16" height="16" viewBox="0 0 16 16" shape-rendering="crispEdges"><path d="M4 4.5a3 2 0 1 1 3 2" fill="none" stroke="#000080" stroke-width="1.4" shape-rendering="geometricPrecision"/><path d="M0 5h4l-1 -3z" fill="#000080" stroke="none" stroke-width="1" /><rect x="2" y="5" width="10" height="1" fill="#0dd"/><rect x="2" y="8" width="10" height="1" fill="#0dd"/><rect x="1" y="11" width="11" height="1" fill="#000"/><rect x="1" y="14" width="11" height="1" fill="#000"/><rect x="1" y="9" width="1" height="6" fill="#000"/></svg>
<svg class="a" style="left:5px;top:373px" width="16" height="16" viewBox="0 0 16 16" shape-rendering="crispEdges"><path d="M0.5 13L12 1.5" fill="none" stroke="#000" stroke-width="1.1" shape-rendering="geometricPrecision"/><path d="M9 3.5l3-1.5 2 2 2 1-1 4-2 1-3-3z" fill="#0000ff" stroke="#000080" stroke-width="1" shape-rendering="geometricPrecision"/></svg>
<svg class="a" style="left:5px;top:393px" width="16" height="16" viewBox="0 0 16 16" shape-rendering="crispEdges"><path d="M1 15L13 3" fill="none" stroke="#999" stroke-width="1.1" shape-rendering="geometricPrecision"/><path d="M9 8l3-2 3 2 1 3-1 3-3 1-3-3z" fill="#a0a0a0" stroke="none" stroke-width="1" shape-rendering="geometricPrecision"/><path d="M0 2h4V0l4 3.5-4 3.5V5H0z" fill="#a0a0a0" stroke="none" stroke-width="1" shape-rendering="geometricPrecision"/></svg>
<svg class="a" style="left:5px;top:415px" width="16" height="16" viewBox="0 0 16 16" shape-rendering="crispEdges"><path d="M1 15L13 3" fill="none" stroke="#999" stroke-width="1.1" shape-rendering="geometricPrecision"/><path d="M9 8l3-2 3 2 1 3-1 3-3 1-3-3z" fill="#a0a0a0" stroke="none" stroke-width="1" shape-rendering="geometricPrecision"/><path d="M8 2H4V0L0 3.5 4 7V5h4z" fill="#a0a0a0" stroke="none" stroke-width="1" shape-rendering="geometricPrecision"/></svg>
<svg class="a" style="left:5px;top:437px" width="16" height="16" viewBox="0 0 16 16" shape-rendering="crispEdges"><path d="M1 15L13 3" fill="none" stroke="#999" stroke-width="1.1" shape-rendering="geometricPrecision"/><path d="M9 8l3-2 3 2 1 3-1 3-3 1-3-3z" fill="#a0a0a0" stroke="none" stroke-width="1" shape-rendering="geometricPrecision"/><path d="M1 0l7 7M8 0L1 7" fill="none" stroke="#a0a0a0" stroke-width="2" shape-rendering="geometricPrecision"/></svg>
<div class="a" style="left:3px;top:242px;width:21px;height:1px;background:#a0a0a0"></div>
<div class="a" style="left:3px;top:243px;width:21px;height:1px;background:#fff"></div>
<div class="a" style="left:3px;top:292px;width:21px;height:1px;background:#a0a0a0"></div>
<div class="a" style="left:3px;top:293px;width:21px;height:1px;background:#fff"></div>
<div class="a" style="left:3px;top:364px;width:21px;height:1px;background:#a0a0a0"></div>
<div class="a" style="left:3px;top:365px;width:21px;height:1px;background:#fff"></div>
<svg class="a" style="left:3px;top:459px" width="4" height="7" viewBox="0 0 4 7" shape-rendering="crispEdges"><path d="M4 0v6L0 3z" fill="#000" stroke="none" stroke-width="1" /></svg>
<div class="a" style="left:27px;top:122px;width:287px;height:17px;background:#bfcddb"></div>
<div class="a t" style="left:29px;top:124px;font-size:12px;line-height:14px;color:#5a5a6a">Project - db1</div>
<div class="a" style="left:297px;top:123px;width:16px;height:15px;background:#f0f0f0;border-top:1px solid #fff;border-left:1px solid #fff;border-right:1px solid #696969;border-bottom:1px solid #696969"></div>
<svg class="a" style="left:300px;top:126px" width="10" height="9" viewBox="0 0 10 9" shape-rendering="crispEdges"><path d="M1 1l7 6M8 1L1 7" fill="none" stroke="#000" stroke-width="2.2" shape-rendering="geometricPrecision"/></svg>
<svg class="a" style="left:33px;top:147px" width="14" height="12" viewBox="0 0 14 12" shape-rendering="crispEdges"><rect x="0" y="0" width="14" height="12" fill="#000"/><rect x="1" y="1" width="12" height="10" fill="#fff"/><rect x="0" y="0" width="14" height="2" fill="#000080"/><rect x="1" y="2" width="2" height="9" fill="#808080"/><rect x="4" y="4" width="3" height="1" fill="#008000"/><rect x="8" y="4" width="3" height="1" fill="#008000"/><rect x="4" y="6" width="7" height="1" fill="#000"/><rect x="4" y="8" width="3" height="1" fill="#000"/><rect x="8" y="8" width="3" height="1" fill="#008000"/></svg>
<svg class="a" style="left:55px;top:147px" width="14" height="12" viewBox="0 0 14 12" shape-rendering="crispEdges"><rect x="0" y="0" width="14" height="12" fill="#a0a0a0"/><rect x="1" y="1" width="12" height="10" fill="#f0f0f0"/><rect x="1" y="1" width="12" height="1" fill="#a0a0a0"/><rect x="2" y="4" width="4" height="1" fill="#a0a0a0"/><rect x="7" y="3" width="5" height="3" fill="#a0a0a0"/><rect x="8" y="4" width="3" height="1" fill="#f0f0f0"/><rect x="2" y="7" width="4" height="1" fill="#a0a0a0"/><rect x="7" y="6" width="5" height="3" fill="#a0a0a0"/><rect x="8" y="7" width="3" height="1" fill="#f0f0f0"/></svg>
<div class="a" style="left:77px;top:142px;width:1px;height:21px;background:#a0a0a0"></div>
<div class="a" style="left:78px;top:142px;width:1px;height:21px;background:#fff"></div>
<div class="a" style="left:81px;top:141px;width:22px;height:22px;border-left:1px solid #a0a0a0;border-top:1px solid #a0a0a0;border-right:1px solid #fff;border-bottom:1px solid #fff;background:repeating-conic-gradient(#f6f6f6 0 25%,#e6e6e6 0 50%) 0 0/2px 2px"></div>
<svg class="a" style="left:85px;top:147px" width="15" height="11" viewBox="0 0 15 11" shape-rendering="crispEdges"><path d="M0.5 1.5h5l1 1.5h7v7.5H0.5z" fill="#c0c0c0" stroke="#000" stroke-width="1" shape-rendering="geometricPrecision"/></svg>
<div class="a" style="left:27px;top:166px;width:287px;height:261px;background:#fff;border-top:1px solid #a0a0a0;border-left:1px solid #a0a0a0;border-right:1px solid #fff;border-bottom:1px solid #fff"></div>
<div class="a" style="left:28px;top:167px;width:285px;height:259px;border-top:1px solid #696969;border-left:1px solid #696969;border-right:1px solid #e3e3e3;border-bottom:1px solid #e3e3e3"></div>
<div class="a" style="left:33px;top:174px;width:9px;height:9px;background:#fff;border:1px solid #808080"></div>
<div class="a" style="left:35px;top:178px;width:5px;height:1px;background:#000"></div>
<div class="a" style="left:43px;top:178px;width:4px;height:1px;background:repeating-linear-gradient(90deg,#808080 0 1px,transparent 1px 2px)"></div>
<div class="a" style="left:56px;top:186px;width:1px;height:68px;background:repeating-linear-gradient(180deg,#808080 0 1px,transparent 1px 2px)"></div>
<div class="a" style="left:52px;top:190px;width:9px;height:9px;background:#fff;border:1px solid #808080"></div>
<div class="a" style="left:54px;top:194px;width:5px;height:1px;background:#000"></div>
<div class="a" style="left:62px;top:194px;width:5px;height:1px;background:repeating-linear-gradient(90deg,#808080 0 1px,transparent 1px 2px)"></div>
<div class="a" style="left:52px;top:254px;width:9px;height:9px;background:#fff;border:1px solid #808080"></div>
<div class="a" style="left:54px;top:258px;width:5px;height:1px;background:#000"></div>
<div class="a" style="left:62px;top:258px;width:5px;height:1px;background:repeating-linear-gradient(90deg,#808080 0 1px,transparent 1px 2px)"></div>
<div class="a" style="left:75px;top:201px;width:1px;height:41px;background:repeating-linear-gradient(180deg,#808080 0 1px,transparent 1px 2px)"></div>
<div class="a" style="left:76px;top:210px;width:10px;height:1px;background:repeating-linear-gradient(90deg,#808080 0 1px,transparent 1px 2px)"></div>
<div class="a" style="left:76px;top:226px;width:10px;height:1px;background:repeating-linear-gradient(90deg,#808080 0 1px,transparent 1px 2px)"></div>
<div class="a" style="left:76px;top:242px;width:10px;height:1px;background:repeating-linear-gradient(90deg,#808080 0 1px,transparent 1px 2px)"></div>
<div class="a" style="left:75px;top:265px;width:1px;height:41px;background:repeating-linear-gradient(180deg,#808080 0 1px,transparent 1px 2px)"></div>
<div class="a" style="left:76px;top:274px;width:9px;height:1px;background:repeating-linear-gradient(90deg,#808080 0 1px,transparent 1px 2px)"></div>
<div class="a" style="left:76px;top:290px;width:9px;height:1px;background:repeating-linear-gradient(90deg,#808080 0 1px,transparent 1px 2px)"></div>
<div class="a" style="left:76px;top:306px;width:9px;height:1px;background:repeating-linear-gradient(90deg,#808080 0 1px,transparent 1px 2px)"></div>
<svg class="a" style="left:47px;top:169px" width="18" height="17" viewBox="0 0 18 17" shape-rendering="crispEdges"><path d="M1 13l3-2 8 1 4 1-6 3z" fill="#fff" stroke="#000" stroke-width="1" shape-rendering="geometricPrecision"/><path d="M3 3l2-1 7 9-2 2z" fill="#0cc" stroke="#000" stroke-width="1.2" shape-rendering="geometricPrecision"/><path d="M4 7h6l1 3H6z" fill="#fff" stroke="#000" stroke-width="1" shape-rendering="geometricPrecision"/><rect x="12" y="0" width="3" height="2" fill="#0c0"/><rect x="9" y="4" width="3" height="2" fill="#ff0"/><rect x="11" y="7" width="2" height="3" fill="#f0f"/><path d="M12 2l-2 3M11 6l1 2" fill="none" stroke="#000" stroke-width="1" /></svg>
<svg width="0" height="0" style="position:absolute"><defs><pattern id="chk" width="2" height="2" patternUnits="userSpaceOnUse"><rect width="1" height="1" fill="#fff"/><rect x="1" y="1" width="1" height="1" fill="#fff"/></pattern></defs></svg>
<svg class="a" style="left:67px;top:188px" width="16" height="13" viewBox="0 0 16 13" shape-rendering="crispEdges"><path d="M1.5 3.5l1-2h5l1 2h5v3" fill="#f8f8f8" stroke="#808080" stroke-width="1" shape-rendering="geometricPrecision"/><path d="M0.5 5.5h13l1 7H1.5z" fill="#f0f0a0" stroke="#808080" stroke-width="1" shape-rendering="geometricPrecision"/><rect x="2" y="2" width="10" height="2" fill="#e8e860"/><rect x="2" y="7" width="11" height="5" fill="#e8e840"/><path d="M2 7h11v5H2z" fill="url(#chk)"/><path d="M12 8l2 4" fill="none" stroke="#000" stroke-width="2" /></svg>
<svg class="a" style="left:67px;top:252px" width="16" height="13" viewBox="0 0 16 13" shape-rendering="crispEdges"><path d="M1.5 3.5l1-2h5l1 2h5v3" fill="#f8f8f8" stroke="#808080" stroke-width="1" shape-rendering="geometricPrecision"/><path d="M0.5 5.5h13l1 7H1.5z" fill="#f0f0a0" stroke="#808080" stroke-width="1" shape-rendering="geometricPrecision"/><rect x="2" y="2" width="10" height="2" fill="#e8e860"/><rect x="2" y="7" width="11" height="5" fill="#e8e840"/><path d="M2 7h11v5H2z" fill="url(#chk)"/><path d="M12 8l2 4" fill="none" stroke="#000" stroke-width="2" /></svg>
<svg class="a" style="left:87px;top:204px" width="13" height="13" viewBox="0 0 13 13" shape-rendering="crispEdges"><rect x="0" y="0" width="13" height="13" fill="#000"/><rect x="0" y="0" width="13" height="1" fill="#000080"/><rect x="1" y="2" width="11" height="10" fill="#fff"/><rect x="2" y="4" width="3" height="1" fill="#000"/><rect x="6" y="3" width="5" height="3" fill="#000"/><rect x="7" y="4" width="3" height="1" fill="#fff"/><rect x="2" y="8" width="3" height="1" fill="#000"/><rect x="6" y="7" width="5" height="3" fill="#000"/><rect x="7" y="8" width="3" height="1" fill="#fff"/></svg>
<svg class="a" style="left:87px;top:220px" width="13" height="13" viewBox="0 0 13 13" shape-rendering="crispEdges"><rect x="0" y="0" width="13" height="13" fill="#000"/><rect x="0" y="0" width="13" height="1" fill="#000080"/><rect x="1" y="2" width="11" height="10" fill="#fff"/><rect x="2" y="4" width="3" height="1" fill="#000"/><rect x="6" y="3" width="5" height="3" fill="#000"/><rect x="7" y="4" width="3" height="1" fill="#fff"/><rect x="2" y="8" width="3" height="1" fill="#000"/><rect x="6" y="7" width="5" height="3" fill="#000"/><rect x="7" y="8" width="3" height="1" fill="#fff"/></svg>
<svg class="a" style="left:87px;top:236px" width="13" height="13" viewBox="0 0 13 13" shape-rendering="crispEdges"><rect x="0" y="0" width="13" height="13" fill="#000"/><rect x="0" y="0" width="13" height="1" fill="#000080"/><rect x="1" y="2" width="11" height="10" fill="#fff"/><rect x="2" y="4" width="3" height="1" fill="#000"/><rect x="6" y="3" width="5" height="3" fill="#000"/><rect x="7" y="4" width="3" height="1" fill="#fff"/><rect x="2" y="8" width="3" height="1" fill="#000"/><rect x="6" y="7" width="5" height="3" fill="#000"/><rect x="7" y="8" width="3" height="1" fill="#fff"/></svg>
<svg class="a" style="left:85px;top:267px" width="17" height="14" viewBox="0 0 17 14" shape-rendering="crispEdges"><path d="M3 9.5L8.5 3M13 3L7 10M9 3l5 8.5M4 9.5h3" fill="none" stroke="#000" stroke-width="1.3" shape-rendering="geometricPrecision"/><path d="M9.5 1L8.2 4" fill="none" stroke="#000" stroke-width="3.2" stroke-linecap="round" shape-rendering="geometricPrecision"/><path d="M9.5 1L8.2 4" fill="none" stroke="#ff0" stroke-width="1.6" stroke-linecap="round" shape-rendering="geometricPrecision"/><path d="M14 1L12.8 4" fill="none" stroke="#000" stroke-width="3.2" stroke-linecap="round" shape-rendering="geometricPrecision"/><path d="M14 1L12.8 4" fill="none" stroke="#f0f" stroke-width="1.6" stroke-linecap="round" shape-rendering="geometricPrecision"/><path d="M1.5 10.5L3.5 9" fill="none" stroke="#000" stroke-width="3.2" stroke-linecap="round" shape-rendering="geometricPrecision"/><path d="M1.5 10.5L3.5 9" fill="none" stroke="#f0f" stroke-width="1.6" stroke-linecap="round" shape-rendering="geometricPrecision"/><path d="M6.5 9.5L8.5 9.5" fill="none" stroke="#000" stroke-width="3.2" stroke-linecap="round" shape-rendering="geometricPrecision"/><path d="M6.5 9.5L8.5 9.5" fill="none" stroke="#0c0" stroke-width="1.6" stroke-linecap="round" shape-rendering="geometricPrecision"/><path d="M12.8 10.5L14.5 12" fill="none" stroke="#000" stroke-width="3.2" stroke-linecap="round" shape-rendering="geometricPrecision"/><path d="M12.8 10.5L14.5 12" fill="none" stroke="#0cc" stroke-width="1.6" stroke-linecap="round" shape-rendering="geometricPrecision"/></svg>
<svg class="a" style="left:85px;top:283px" width="17" height="14" viewBox="0 0 17 14" shape-rendering="crispEdges"><path d="M3 9.5L8.5 3M13 3L7 10M9 3l5 8.5M4 9.5h3" fill="none" stroke="#000" stroke-width="1.3" shape-rendering="geometricPrecision"/><path d="M9.5 1L8.2 4" fill="none" stroke="#000" stroke-width="3.2" stroke-linecap="round" shape-rendering="geometricPrecision"/><path d="M9.5 1L8.2 4" fill="none" stroke="#ff0" stroke-width="1.6" stroke-linecap="round" shape-rendering="geometricPrecision"/><path d="M14 1L12.8 4" fill="none" stroke="#000" stroke-width="3.2" stroke-linecap="round" shape-rendering="geometricPrecision"/><path d="M14 1L12.8 4" fill="none" stroke="#f0f" stroke-width="1.6" stroke-linecap="round" shape-rendering="geometricPrecision"/><path d="M1.5 10.5L3.5 9" fill="none" stroke="#000" stroke-width="3.2" stroke-linecap="round" shape-rendering="geometricPrecision"/><path d="M1.5 10.5L3.5 9" fill="none" stroke="#f0f" stroke-width="1.6" stroke-linecap="round" shape-rendering="geometricPrecision"/><path d="M6.5 9.5L8.5 9.5" fill="none" stroke="#000" stroke-width="3.2" stroke-linecap="round" shape-rendering="geometricPrecision"/><path d="M6.5 9.5L8.5 9.5" fill="none" stroke="#0c0" stroke-width="1.6" stroke-linecap="round" shape-rendering="geometricPrecision"/><path d="M12.8 10.5L14.5 12" fill="none" stroke="#000" stroke-width="3.2" stroke-linecap="round" shape-rendering="geometricPrecision"/><path d="M12.8 10.5L14.5 12" fill="none" stroke="#0cc" stroke-width="1.6" stroke-linecap="round" shape-rendering="geometricPrecision"/></svg>
<svg class="a" style="left:85px;top:299px" width="17" height="14" viewBox="0 0 17 14" shape-rendering="crispEdges"><path d="M3 9.5L8.5 3M13 3L7 10M9 3l5 8.5M4 9.5h3" fill="none" stroke="#000" stroke-width="1.3" shape-rendering="geometricPrecision"/><path d="M9.5 1L8.2 4" fill="none" stroke="#000" stroke-width="3.2" stroke-linecap="round" shape-rendering="geometricPrecision"/><path d="M9.5 1L8.2 4" fill="none" stroke="#ff0" stroke-width="1.6" stroke-linecap="round" shape-rendering="geometricPrecision"/><path d="M14 1L12.8 4" fill="none" stroke="#000" stroke-width="3.2" stroke-linecap="round" shape-rendering="geometricPrecision"/><path d="M14 1L12.8 4" fill="none" stroke="#f0f" stroke-width="1.6" stroke-linecap="round" shape-rendering="geometricPrecision"/><path d="M1.5 10.5L3.5 9" fill="none" stroke="#000" stroke-width="3.2" stroke-linecap="round" shape-rendering="geometricPrecision"/><path d="M1.5 10.5L3.5 9" fill="none" stroke="#f0f" stroke-width="1.6" stroke-linecap="round" shape-rendering="geometricPrecision"/><path d="M6.5 9.5L8.5 9.5" fill="none" stroke="#000" stroke-width="3.2" stroke-linecap="round" shape-rendering="geometricPrecision"/><path d="M6.5 9.5L8.5 9.5" fill="none" stroke="#0c0" stroke-width="1.6" stroke-linecap="round" shape-rendering="geometricPrecision"/><path d="M12.8 10.5L14.5 12" fill="none" stroke="#000" stroke-width="3.2" stroke-linecap="round" shape-rendering="geometricPrecision"/><path d="M12.8 10.5L14.5 12" fill="none" stroke="#0cc" stroke-width="1.6" stroke-linecap="round" shape-rendering="geometricPrecision"/></svg>
<div class="a t" style="left:69px;top:172px;font-size:11px;font-weight:bold;letter-spacing:0.8px">db1 (db1)</div>
<div class="a t" style="left:87px;top:188px;letter-spacing:-0.15px">Microsoft Access Class Objects</div>
<div class="a t" style="left:106px;top:204px;letter-spacing:-0.15px">Form_Form1</div>
<div class="a t" style="left:106px;top:220px;letter-spacing:-0.15px">Form_frmTest</div>
<div class="a t" style="left:106px;top:236px;letter-spacing:-0.15px">Form_Order Details</div>
<div class="a t" style="left:87px;top:252px;letter-spacing:-0.15px">Modules</div>
<div class="a t" style="left:106px;top:268px;letter-spacing:-0.15px">Module1</div>
<div class="a t" style="left:106px;top:284px;letter-spacing:-0.15px">Module2</div>
<div class="a" style="left:104px;top:298px;width:71px;height:16px;background:#ebebeb"></div>
<div class="a t" style="left:106px;top:300px;letter-spacing:-0.15px">MyLanguages</div>
<div class="a" style="left:27px;top:433px;width:287px;height:17px;background:#bfcddb"></div>
<div class="a t" style="left:29px;top:435px;font-size:11.75px;line-height:14px;color:#5a5a6a">Properties - MyLanguages</div>
<div class="a" style="left:297px;top:434px;width:16px;height:15px;background:#f0f0f0;border-top:1px solid #fff;border-left:1px solid #fff;border-right:1px solid #696969;border-bottom:1px solid #696969"></div>
<svg class="a" style="left:300px;top:437px" width="10" height="9" viewBox="0 0 10 9" shape-rendering="crispEdges"><path d="M1 1l7 6M8 1L1 7" fill="none" stroke="#000" stroke-width="2.2" shape-rendering="geometricPrecision"/></svg>
<div class="a" style="left:27px;top:454px;width:284px;height:18px;background:#fff;border-top:2px solid #696969;border-left:2px solid #696969;border-bottom:1px solid #fff"></div>
<div class="a t" style="left:31px;top:458px;"><b style="letter-spacing:0.4px">MyLanguages</b> <span style="letter-spacing:-0.3px">Module</span></div>
<div class="a" style="left:292px;top:456px;width:18px;height:15px;background:#f0f0f0;border-top:1px solid #fff;border-left:1px solid #fff;border-right:1px solid #696969;border-bottom:1px solid #696969"></div>
<svg class="a" style="left:298px;top:462px" width="6" height="4" viewBox="0 0 6 4" shape-rendering="crispEdges"><path d="M0 0h5l-2.5 3z" fill="#000" stroke="none" stroke-width="1" /></svg>
<div class="a" style="left:29px;top:476px;width:64px;height:22px;background:#f0f0f0;border-top:1px solid #fff;border-left:1px solid #fff;border-right:2px solid #696969"></div>
<div class="a t" style="left:34px;top:479px;font-size:11px;line-height:13px">Alphabetic</div>
<div class="a" style="left:93px;top:479px;width:68px;height:19px;background:#f0f0f0;border-top:1px solid #fff;border-right:2px solid #696969"></div>
<div class="a t" style="left:96px;top:481px;font-size:11px;line-height:13px">Categorized</div>
<div class="a" style="left:30px;top:495px;width:284px;height:218px;background:#fff;border-top:1px solid #fff;border-left:1px solid #fff;border-right:1px solid #696969"></div>
<div class="a" style="left:312px;top:496px;width:1px;height:217px;background:#a0a0a0"></div>
<div class="a" style="left:31px;top:497px;width:279px;height:216px;border-top:1px solid #696969;border-left:1px solid #696969;border-right:1px solid #696969"></div>
<div class="a" style="left:32px;top:498px;width:277px;height:215px;border-top:1px solid #a0a0a0;border-left:1px solid #a0a0a0"></div>
<div class="a" style="left:33px;top:499px;width:276px;height:214px;border-top:1px solid #696969;border-left:1px solid #696969"></div>
<div class="a" style="left:307px;top:500px;width:1px;height:213px;background:#e3e3e3"></div>
<div class="a" style="left:34px;top:500px;width:38px;height:15px;background:#3399ff"></div>
<div class="a t" style="left:35px;top:502px;color:#fff">(Name)</div>
<div class="a t" style="left:74px;top:502px;">MyLanguages</div>
<div class="a" style="left:34px;top:515px;width:273px;height:1px;background:#a0a0a0"></div>
<div class="a" style="left:314px;top:122px;width:6px;height:591px;background:#f0f0f0"></div>
<div class="a" style="left:320px;top:121px;width:911px;height:592px;border-left:1px solid #a0a0a0;border-top:1px solid #a0a0a0"></div>
<div class="a" style="left:321px;top:122px;width:910px;height:591px;border-left:1px solid #696969;border-top:1px solid #696969"></div>
<div class="a" style="left:322px;top:123px;width:909px;height:590px;border-left:1px solid #fff;border-top:1px solid #fff"></div>
<div class="a" style="left:332px;top:126px;width:462px;height:21px;background:#fff;border-left:2px solid #696969;border-top:2px solid #696969;border-bottom:1px solid #e3e3e3"></div>
<div class="a" style="left:332px;top:147px;width:462px;height:1px;background:#fff"></div>
<div class="a t" style="left:336px;top:130px;font-weight:bold;letter-spacing:0.4px">(General)</div>
<div class="a" style="left:776px;top:127px;width:17px;height:19px;background:#f0f0f0;border-top:1px solid #fff;border-left:1px solid #fff;border-right:1px solid #696969;border-bottom:1px solid #696969"></div>
<svg class="a" style="left:781px;top:134px" width="7" height="4" viewBox="0 0 7 4" shape-rendering="crispEdges"><path d="M0 0h7l-3.5 4z" fill="#000" stroke="none" stroke-width="1" /></svg>
<div class="a" style="left:805px;top:126px;width:440px;height:21px;background:#fff;border-left:2px solid #696969;border-top:2px solid #696969;border-bottom:1px solid #e3e3e3"></div>
<div class="a" style="left:805px;top:147px;width:440px;height:1px;background:#fff"></div>
<div class="a t" style="left:809px;top:130px;font-weight:bold;letter-spacing:0.3px">AddSecondLC</div>
<div class="a" style="left:322px;top:150px;width:909px;height:563px;background:#fff;border-top:1px solid #777;border-bottom:none"></div>
<div class="a" style="left:322px;top:151px;width:909px;height:1px;background:#696969"></div>
<div class="a" style="left:320px;top:150px;width:1px;height:563px;background:#a0a0a0"></div>
<div class="a" style="left:322px;top:150px;width:1px;height:563px;background:#a0a0a0"></div>
<div class="a" style="left:323px;top:150px;width:1px;height:563px;background:#696969"></div>
<div class="a" style="left:324px;top:152px;width:20px;height:561px;background:#f0f0f0"></div>
<div class="a" style="left:344px;top:152px;width:1px;height:561px;background:#000"></div>
<div class="a" style="left:345px;top:201px;width:886px;height:1px;background:#808080"></div>
<div class="code" style="top:155px"><span class="k">Option Compare Database</span>

<span class="k">Public</span> Language2 <span class="k">As String</span>

<span class="k">Public Sub</span> AddSecondLC(strLang <span class="k">As String</span>)
    <span class="k">Select Case</span> strLang
    <span class="k">Case</span> "Dutch"
       <span class="c">' do something here</span>
       Language2 = "Whatever based on your processing"
    <span class="k">Case</span> "English"
       <span class="c">' do something here</span>
       Language2 = "Whatever based on your processing"
    <span class="k">Case</span> "Spanish", "Portuguese"
       <span class="c">' do something here</span>
       Language2 = "Whatever based on your processing"
    <span class="k">End Select</span>

<span class="k">End Sub</span></div>
<div class="a" style="left:788px;top:379px;width:1px;height:16px;background:#000"></div>
</div>
<svg class="a" style="left:0;top:0" width="1270" height="752" viewBox="0 0 1270 752"><defs><filter id="sh" x="-20%" y="-20%" width="140%" height="140%"><feGaussianBlur in="SourceAlpha" stdDeviation="2"/><feOffset dx="5" dy="5"/><feComponentTransfer><feFuncA type="linear" slope="0.3"/></feComponentTransfer><feMerge><feMergeNode/><feMergeNode in="SourceGraphic"/></feMerge></filter></defs><g filter="url(#sh)" fill="#f00" stroke="none"><path d="M489.5 469L490 422H482L491.5 403L502 422H494L493.5 469Z"/><path d="M154 515.5L175 517.6L170 524.5L363 644L361 648L167.5 528.5L165.3 532.8Z"/></g></svg>
<div class="a" style="left:360px;top:471px;width:397px;height:209px;border:3px solid #f00;background:#fff;box-shadow:9px 9px 4px rgba(0,0,0,0.22)"></div>
<div class="a t" style="left:368px;top:487px;font-size:18.67px;font-weight:bold;color:#f00;line-height:22px;letter-spacing:0.46px;word-spacing:-0.6px">Your standard module should look like
this.  You pass the language to it and it
processes however you want and then
assigns a value to the public string of
Language2.

Also, name your module something
different than the sub.</div>
</body></html>
